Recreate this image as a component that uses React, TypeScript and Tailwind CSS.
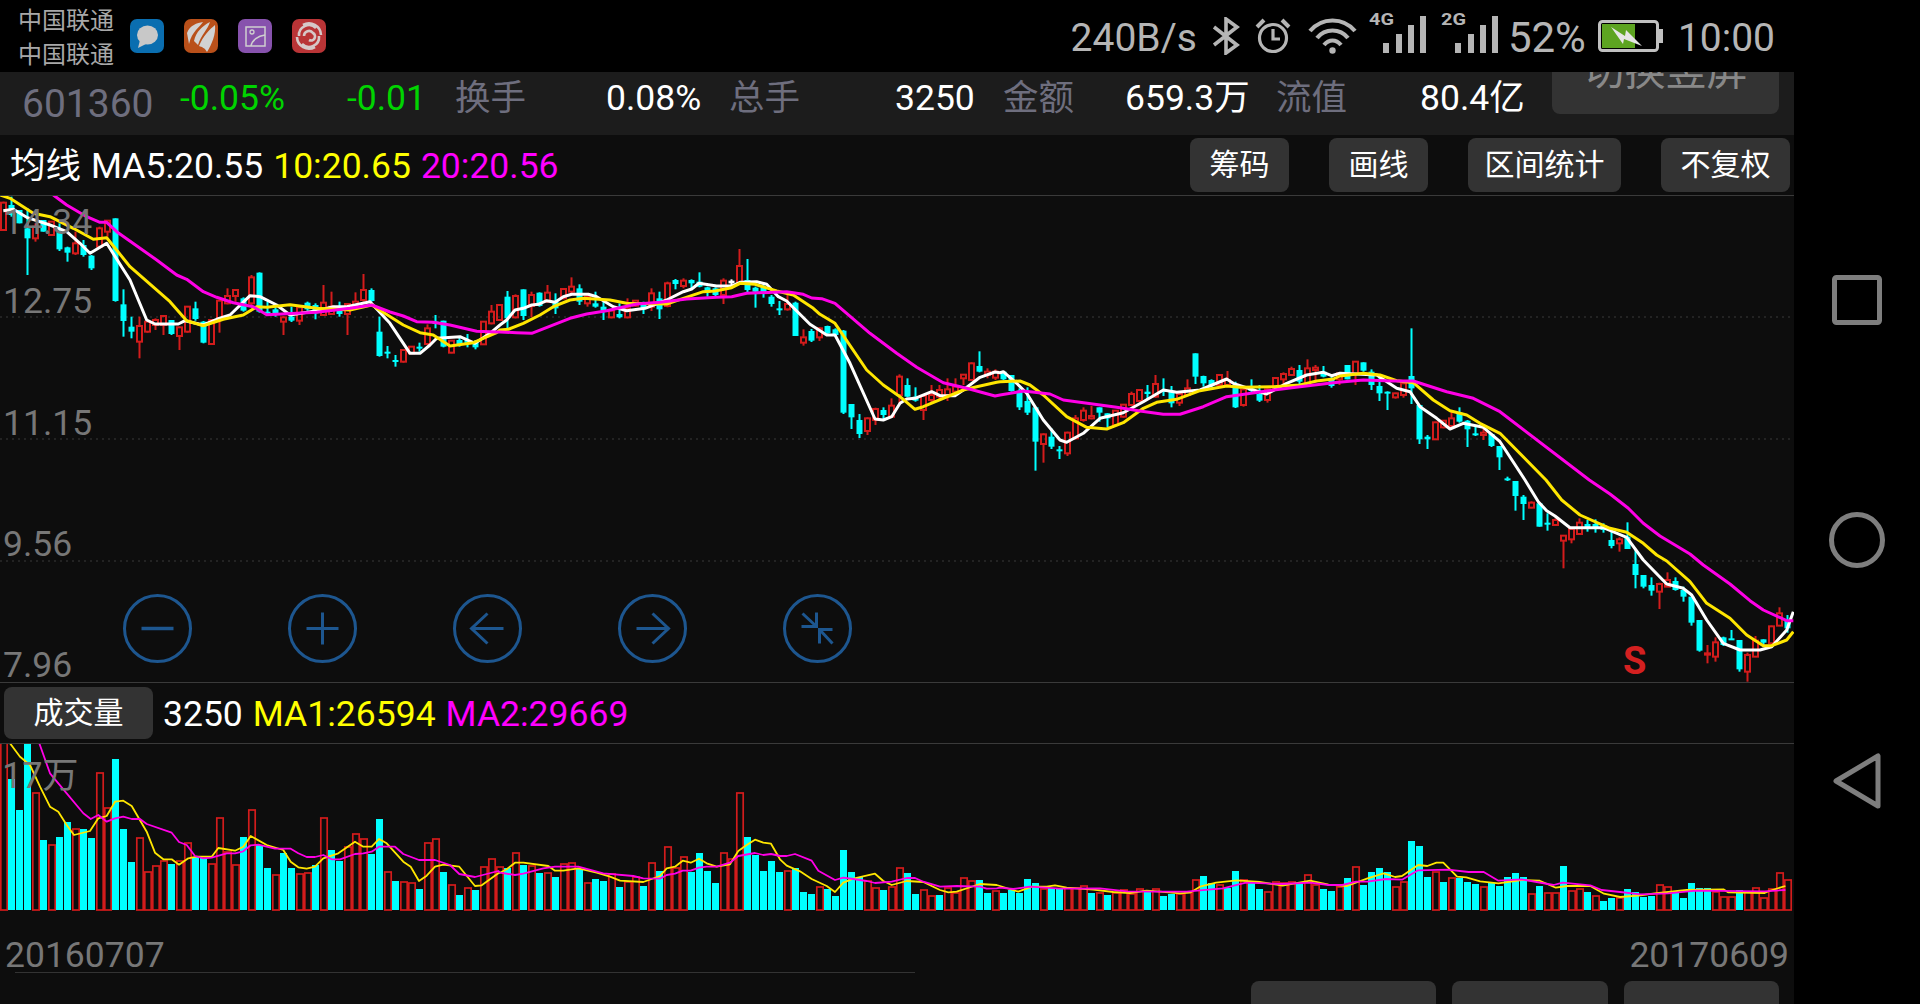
const RED = "#d31c1c";
const CYAN = "#00ffff";
const WHITE = "#ffffff";
const YELLOW = "#ffe600";
const MAGENTA = "#ff00e6";

// one chart slot is 8px wide; positive volume = cyan, negative = red
const VOL = [
  -167, 131, 100, 166, -117, 70, -65, 73, 88, -81, 81, 72, -137, -102, 151, 81, 48, -72, -38, -44, -49, 46, -49, -67, 53, 52, -46, -92, -58, -45, 73, -100, 65, 42, -35, 57, 42, -36, -37, 45, -92, 60, 49, -63, -76, -71, 56, 91, -38, 29, -28, -27, 21, -67, -71, 38, -25, 15, -22, 20, -43, -51, -43,
  42, -57, 45, -44, 37, -37, 33, -46, -47, 41, -27, 31, 29, -36, 23, -28, -33, 24, -47, 39, -63, -42, -53, 38, 57, 39, 27, -57, -51, -117, 73, 55, 39, 49, 38, -39, 42, 18, 16, -23, 21, 14, 60, 38, 33, -29, -22, 20, -23, -42, 37, 16, -20, -14, 15, -22, -17, -32, -29, 30, 17, -19,
  17, 20, 17, 31, 27, -21, 22, 21, -22, -22, -24, 17, -17, 15, -17, -20, -16, -21, 19, -21, 14, 16, -16, -18, -30, 34, 27, -25, 22, 39, -30, 27, 21, -18, -28, -27, -28, 27, -35, -25, 21, 19, -23, 32, -43, 25, 38, 42, 38, -23, -28, 69, 64, 33, -38, 28, -32, 32, 28, 26, -23, 27, 24, 33, 37, 33, -16, 24, -17, -17, 44, -19, -21, 18, -14, 9, 12, -12, 21, 18, 13, 14, -25, -23, 17, 12, 27, 22, 22, -18, -13, -13, 20, -18, -22, -12, -21, -37, -30,
];

type Candle = [string, number, number, number, number];
type Zone = { start: number; ox: number; oy: number; rows: Candle[] };

const ZONES: Zone[] = [
  {
    start: 0, ox: 0, oy: 190,
    rows: [
      ["r", 35, 38, 120, 122], ["c", 20, 45, 75, 80], ["c", 60, 60, 100, 100], ["c", 55, 115, 145, 255], ["r", 100, 110, 145, 155], ["c", 90, 90, 125, 125], ["r", 95, 95, 135, 138], ["c", 100, 125, 178, 183], ["c", 170, 172, 188, 215], ["r", 125, 160, 190, 195], ["c", 150, 165, 195, 200], ["c", 195, 197, 235, 240], ["r", 110, 115, 170, 175], ["r", 90, 92, 125, 140], ["c", 85, 85, 333, 335], ["c", 298, 343, 393, 440], ["c", 380, 410, 425, 445], ["r", 380, 408, 455, 505], ["r", 392, 395, 425, 428], ["r", 385, 390, 405, 420], ["r", 375, 378, 405, 435], ["c", 390, 390, 432, 435], ["r", 410, 412, 438, 480], ["r", 348, 350, 425, 428], ["c", 335, 355, 387, 392], ["c", 393, 395, 458, 460], ["r", 388, 390, 462, 464], ["r", 330, 332, 385, 428], ["r", 295, 318, 340, 343], ["r", 298, 300, 318, 335], ["c", 322, 325, 362, 365], ["r", 255, 262, 340, 345], ["c", 247, 248, 365, 368], ["c", 335, 365, 370, 378],
      ["c", 350, 358, 372, 380], ["r", 378, 382, 395, 435], ["c", 350, 380, 392, 396], ["r", 350, 352, 392, 405], ["c", 335, 338, 358, 362], ["c", 340, 345, 370, 388], ["r", 285, 338, 375, 378], ["r", 305, 350, 372, 375], ["c", 335, 355, 372, 380], ["r", 340, 342, 372, 435], ["r", 307, 335, 350, 352], ["r", 252, 300, 330, 335], ["c", 295, 300, 333, 335], ["c", 380, 425, 498, 500], ["c", 468, 485, 490, 505], ["c", 495, 510, 515, 530], ["r", 478, 480, 515, 518], ["r", 468, 470, 490, 492], ["c", 458, 470, 475, 485], ["r", 403, 415, 462, 465], ["c", 375, 395, 402, 415], ["c", 392, 392, 470, 472], ["r", 450, 452, 488, 490], ["c", 440, 450, 462, 470], ["c", 432, 450, 462, 472], ["c", 450, 458, 472, 478], ["r", 395, 395, 463, 465], ["r", 345, 365, 400, 403], ["r", 343, 345, 390, 393],
    ],
  },
  {
    start: 63, ox: 500, oy: 240,
    rows: [
      ["c", 153, 170, 235, 265], ["r", 163, 168, 232, 235], ["c", 148, 148, 228, 240], ["r", 155, 165, 198, 232], ["c", 157, 158, 198, 200], ["r", 135, 158, 185, 188], ["c", 160, 185, 205, 222], ["r", 145, 147, 175, 178], ["r", 112, 140, 155, 165], ["c", 133, 145, 185, 195], ["r", 165, 170, 190, 200], ["c", 155, 190, 200, 203], ["c", 185, 200, 212, 240], ["r", 210, 212, 232, 235], ["c", 190, 222, 232, 235], ["r", 175, 205, 232, 235], ["r", 180, 182, 197, 200], ["c", 185, 190, 205, 222], ["r", 145, 160, 200, 213], ["c", 155, 175, 208, 237], ["r", 125, 130, 198, 202], ["c", 117, 120, 132, 148], ["r", 115, 122, 138, 145], ["c", 118, 120, 130, 145], ["c", 97, 125, 140, 142], ["c", 140, 142, 158, 170], ["c", 142, 145, 165, 168], ["r", 115, 122, 165, 192], ["w", 118, 122, 130, 140], ["r", 27, 78, 130, 135],
      ["c", 57, 120, 150, 160], ["c", 140, 143, 155, 203], ["c", 135, 140, 160, 173], ["c", 165, 170, 192, 200], ["c", 183, 205, 210, 225], ["r", 165, 192, 208, 212], ["c", 185, 188, 288, 288], ["r", 268, 292, 308, 317], ["c", 267, 273, 302, 306], ["r", 262, 265, 292, 303], ["c", 257, 258, 280, 282], ["c", 265, 268, 285, 290], ["c", 270, 272, 518, 522], ["c", 492, 492, 532, 567], ["c", 522, 540, 582, 594], ["r", 532, 535, 573, 585], ["r", 503, 507, 540, 555], ["c", 502, 510, 525, 537], ["r", 475, 497, 530, 533], ["r", 403, 410, 465, 490], ["c", 415, 435, 470, 472], ["c", 442, 470, 482, 485], ["r", 465, 468, 510, 540], ["r", 435, 465, 480, 488], ["r", 435, 450, 470, 478], ["r", 415, 448, 465, 483], ["r", 415, 440, 455, 458], ["r", 402, 404, 415, 435], ["r", 367, 370, 420, 423], ["c", 334, 378, 395, 397], ["r", 385, 395, 405, 415], ["r", 388, 395, 413, 420],
    ],
  },
  {
    start: 125, ox: 1000, oy: 320,
    rows: [
      ["c", 155, 155, 178, 180], ["c", 165, 165, 213, 215], ["c", 205, 212, 262, 270], ["c", 202, 243, 278, 285], ["c", 260, 262, 365, 452], ["r", 340, 343, 372, 428], ["c", 325, 350, 380, 387], ["c", 378, 388, 392, 417], ["r", 335, 338, 400, 408], ["r", 285, 295, 355, 358], ["r", 262, 272, 300, 305], ["r", 258, 288, 295, 298], ["c", 262, 262, 278, 305], ["c", 280, 280, 295, 322], ["r", 270, 272, 315, 318], ["r", 252, 254, 290, 293], ["r", 215, 222, 255, 258], ["r", 208, 210, 243, 245], ["c", 195, 215, 222, 237], ["r", 165, 192, 230, 233], ["c", 175, 210, 215, 228], ["c", 198, 212, 250, 262], ["r", 220, 222, 248, 258], ["r", 178, 205, 225, 228], ["c", 100, 100, 170, 192], ["c", 167, 168, 190, 200], ["c", 178, 180, 195, 203], ["r", 163, 165, 195, 198], ["r", 153, 180, 195, 200], ["c", 185, 195, 262, 264], ["r", 205, 208, 255, 260],
      ["c", 178, 205, 213, 218], ["c", 195, 222, 242, 246], ["r", 205, 208, 240, 248], ["r", 172, 174, 205, 208], ["r", 157, 162, 178, 195], ["r", 140, 147, 165, 168], ["c", 135, 150, 185, 195], ["r", 118, 145, 190, 193], ["r", 135, 143, 150, 180], ["c", 138, 155, 170, 172], ["c", 170, 175, 198, 203], ["r", 157, 160, 178, 195], ["c", 135, 135, 178, 178], ["r", 124, 125, 160, 195], ["c", 127, 127, 152, 155], ["c", 148, 155, 195, 210], ["c", 170, 198, 220, 243], ["c", 214, 215, 218, 270], ["r", 218, 220, 232, 236], ["r", 185, 190, 225, 233], ["c", 25, 168, 205, 252], ["c", 255, 255, 358, 372], ["c", 345, 350, 358, 387], ["r", 305, 307, 358, 360], ["r", 300, 302, 322, 325], ["r", 272, 295, 318, 322], ["c", 262, 278, 305, 308], ["c", 300, 302, 328, 381], ["c", 320, 340, 345, 348], ["r", 325, 338, 345, 360], ["c", 340, 342, 378, 381], ["c", 378, 378, 412, 450],
    ],
  },
  {
    start: 188, ox: 1500, oy: 480,
    rows: [
      ["c", -10, -5, 0, 3], ["c", 3, 3, 48, 92], ["c", 45, 50, 72, 120], ["r", 64, 68, 83, 85], ["c", 70, 70, 140, 140], ["c", 100, 128, 132, 152], ["r", 115, 120, 135, 136], ["r", 165, 167, 182, 265], ["r", 145, 147, 178, 190], ["r", 115, 128, 162, 163], ["c", 120, 132, 145, 155], ["c", 118, 132, 145, 158], ["c", 130, 135, 150, 158], ["c", 150, 180, 198, 205], ["r", 172, 178, 190, 215], ["c", 127, 170, 207, 207], ["c", 210, 252, 285, 325], ["c", 285, 285, 320, 325], ["c", 292, 315, 332, 347], ["r", 308, 312, 335, 387], ["r", 277, 300, 320, 320], ["c", 292, 303, 330, 332], ["c", 320, 330, 350, 365], ["c", 350, 350, 428, 437], ["c", 420, 420, 512, 515], ["r", 495, 520, 524, 550], ["r", 472, 487, 530, 545], ["c", 470, 472, 495, 498], ["c", 450, 475, 478, 478], ["c", 480, 480, 568, 575], ["r", 518, 525, 575, 605], ["r", 468, 482, 530, 530], ["c", 478, 478, 488, 500], ["r", 437, 439, 490, 490], ["r", 382, 400, 437, 437], ["c", 405, 420, 445, 458],
    ],
  },
];

type Seg = [number, number, number, number[]];

// each section holds points as read off a crop: page x = ox + v / sx, page y = oy + v / 3
function toPoints(segs: Seg[]) {
  const out: string[] = [];
  let last = -1;
  for (const [ox, oy, sx, pts] of segs) {
    for (let i = 0; i < pts.length; i += 2) {
      const x = ox + pts[i] / sx;
      const y = oy + pts[i + 1] / 3;
      if (x <= last) continue;
      last = x;
      out.push(`${x.toFixed(1)},${y.toFixed(1)}`);
    }
  }
  return out.join(" ");
}

const MA5 = toPoints([
  [0, 190, 3, [10, 62, 40, 58, 80, 82, 150, 105, 200, 125, 240, 160, 270, 190, 320, 160, 390, 270, 440, 390, 465, 402, 535, 402, 555, 392, 610, 405, 650, 388, 690, 375, 750, 317, 780, 320, 830, 345, 870, 375, 950, 362, 1000, 350, 1040, 350, 1110, 335, 1170, 400, 1230, 490, 1260, 490, 1290, 465, 1310, 445, 1380, 440, 1425, 460, 1470, 430]],
  [500, 240, 3, [0, 255, 20, 240, 45, 210, 70, 205, 95, 195, 115, 193, 140, 182, 165, 187, 190, 170, 215, 163, 265, 163, 290, 170, 340, 200, 380, 212, 435, 205, 500, 180, 550, 155, 575, 147, 597, 130, 650, 138, 695, 138, 720, 127, 770, 125, 800, 133, 835, 170, 860, 183, 930, 253, 980, 285, 1005, 285, 1050, 370, 1125, 537, 1150, 540, 1175, 530, 1200, 490, 1220, 477, 1245, 475, 1295, 455, 1320, 467, 1365, 467, 1390, 450, 1440, 412, 1485, 396]],
  [1000, 320, 3, [0, 158, 10, 155, 50, 190, 80, 220, 130, 300, 180, 360, 200, 367, 250, 340, 300, 295, 370, 278, 430, 245, 490, 210, 530, 217, 600, 210, 680, 177, 700, 190, 760, 210, 800, 222, 860, 190, 920, 165, 970, 157, 995, 167, 1020, 160, 1130, 165, 1190, 205, 1230, 215, 1260, 260, 1310, 295, 1350, 327, 1390, 310, 1450, 322, 1500, 365]],
  [1500, 480, 3, [75, 0, 115, 65, 140, 92, 165, 108, 210, 143, 310, 143, 380, 172, 430, 240, 500, 312, 550, 325, 575, 345, 620, 420, 670, 490, 720, 510, 780, 510, 815, 500, 860, 450, 880, 395]],
]);

const MA10 = toPoints([
  [0, 190, 3, [0, 15, 30, 25, 100, 70, 150, 80, 220, 115, 280, 148, 320, 143, 390, 230, 510, 335, 560, 392, 610, 407, 670, 388, 730, 375, 770, 350, 800, 352, 870, 344, 950, 355, 1050, 360, 1115, 345, 1210, 405, 1260, 428, 1300, 435, 1350, 468, 1420, 458, 1490, 428]],
  [500, 240, 3, [0, 270, 25, 268, 70, 250, 120, 225, 160, 200, 210, 180, 250, 175, 330, 180, 380, 190, 500, 192, 550, 175, 610, 155, 645, 153, 695, 143, 720, 130, 765, 133, 830, 153, 880, 165, 940, 205, 960, 223, 1005, 250, 1100, 390, 1150, 435, 1200, 470, 1245, 508, 1270, 500, 1390, 450, 1430, 440, 1490, 427]],
  [1000, 320, 3, [0, 185, 60, 183, 90, 195, 130, 225, 200, 290, 260, 322, 320, 327, 370, 308, 430, 265, 470, 247, 530, 238, 600, 212, 680, 198, 720, 202, 820, 200, 900, 195, 950, 183, 1000, 177, 1020, 168, 1090, 160, 1140, 165, 1190, 182, 1240, 188, 1300, 240, 1350, 272, 1400, 285, 1440, 310, 1500, 340]],
  [1500, 480, 3, [138, 0, 185, 60, 240, 105, 330, 145, 380, 157, 430, 190, 470, 225, 500, 243, 570, 305, 620, 370, 690, 415, 740, 465, 790, 497, 815, 497, 860, 480, 880, 455]],
]);

const MA20 = toPoints([
  [0, 190, 3, [160, 15, 200, 45, 260, 80, 300, 97, 320, 97, 350, 125, 470, 210, 530, 255, 560, 268, 610, 305, 650, 322, 700, 338, 760, 350, 800, 374, 950, 367, 1050, 355, 1115, 345, 1170, 366, 1210, 378, 1250, 395, 1300, 397, 1350, 405, 1430, 424, 1490, 426]],
  [500, 240, 3, [0, 276, 50, 278, 95, 280, 210, 235, 260, 222, 320, 212, 410, 192, 480, 187, 560, 177, 650, 172, 695, 170, 740, 160, 860, 155, 910, 163, 935, 174, 965, 176, 1005, 190, 1110, 280, 1190, 340, 1250, 382, 1330, 428, 1400, 445, 1485, 468]],
  [1000, 320, 3, [0, 225, 70, 213, 150, 222, 190, 240, 350, 262, 420, 273, 490, 283, 540, 283, 610, 260, 680, 230, 800, 213, 900, 200, 1000, 188, 1090, 180, 1180, 183, 1240, 183, 1340, 215, 1420, 235, 1500, 275]],
  [1500, 480, 3, [268, 0, 330, 42, 385, 85, 430, 130, 480, 168, 570, 222, 610, 255, 690, 312, 750, 362, 790, 390, 860, 422, 880, 422]],
]);

const VOL_MA1 = toPoints([
  [0, 730, 3, [30, 40, 60, 80, 90, 105, 120, 170, 150, 230, 175, 245, 200, 285, 222, 315, 270, 303, 295, 265, 320, 258, 345, 215, 370, 212, 395, 228, 440, 305, 465, 368, 490, 388, 515, 388, 537, 404, 565, 385, 590, 380, 635, 380, 655, 354, 705, 362, 730, 350, 752, 318, 800, 345, 850, 360, 872, 395, 895, 412, 920, 416, 945, 410, 970, 385, 1015, 370, 1065, 335, 1090, 350, 1115, 350, 1137, 327, 1160, 340, 1210, 395, 1232, 410, 1257, 453, 1280, 437, 1305, 410, 1330, 404, 1378, 410, 1425, 468, 1445, 466, 1495, 430]],
  [500, 780, 3, [0, 278, 20, 268, 45, 248, 70, 248, 145, 258, 165, 272, 190, 272, 235, 265, 290, 278, 330, 290, 360, 302, 430, 306, 480, 288, 500, 265, 525, 260, 548, 242, 572, 248, 597, 236, 620, 250, 650, 260, 690, 253, 715, 213, 740, 195, 765, 179, 790, 188, 813, 191, 840, 238, 860, 257, 900, 274, 935, 297, 980, 318, 1005, 336, 1030, 308, 1060, 296, 1125, 281, 1150, 303, 1175, 315, 1220, 303, 1270, 306, 1320, 330, 1345, 337, 1370, 335, 1440, 312, 1490, 315]],
  [1000, 820, 3, [0, 198, 55, 215, 95, 200, 140, 200, 165, 196, 200, 203, 280, 209, 340, 216, 390, 219, 440, 212, 480, 215, 540, 220, 570, 218]],
  [1200, 730, 2.178, [0, 470, 35, 458, 80, 451, 130, 456, 180, 467, 240, 452, 280, 464, 320, 468, 365, 445, 400, 430, 425, 441, 440, 438, 475, 405, 495, 408, 515, 398, 530, 398, 560, 440, 580, 442, 610, 454, 650, 460, 700, 450, 740, 452, 775, 473, 800, 468, 850, 468, 880, 491, 915, 501, 960, 496, 990, 490, 1060, 480, 1140, 478, 1150, 487, 1230, 489, 1240, 483, 1275, 468]],
]);

const VOL_MA2 = toPoints([
  [0, 730, 3, [118, 40, 150, 130, 200, 190, 250, 250, 272, 267, 295, 255, 320, 275, 345, 265, 370, 260, 395, 267, 420, 267, 440, 282, 515, 308, 537, 336, 560, 345, 585, 378, 610, 385, 635, 383, 680, 370, 705, 370, 730, 364, 752, 346, 775, 344, 825, 356, 872, 356, 895, 370, 920, 381, 945, 381, 970, 375, 995, 388, 1020, 388, 1065, 372, 1090, 370, 1115, 365, 1137, 350, 1185, 350, 1210, 372, 1257, 390, 1305, 390, 1350, 405, 1378, 432, 1425, 441, 1495, 423]],
  [500, 780, 3, [0, 278, 45, 285, 70, 281, 130, 265, 165, 260, 235, 260, 310, 280, 400, 288, 430, 295, 480, 296, 500, 285, 525, 281, 548, 272, 572, 272, 597, 263, 620, 260, 650, 260, 690, 248, 715, 228, 765, 219, 790, 225, 813, 222, 840, 228, 860, 228, 885, 222, 935, 242, 955, 272, 1005, 300, 1030, 293, 1060, 297, 1100, 303, 1125, 309, 1175, 305, 1220, 294, 1245, 294, 1270, 305, 1320, 320, 1370, 318, 1440, 320, 1460, 326, 1490, 325]],
  [1000, 820, 3, [0, 203, 40, 207, 90, 200, 180, 206, 300, 205, 380, 214, 470, 215, 560, 215]],
  [1200, 730, 2.178, [0, 481, 50, 475, 100, 458, 180, 462, 240, 458, 280, 465, 310, 465, 340, 455, 365, 455, 405, 447, 440, 449, 475, 421, 540, 419, 585, 426, 618, 426, 650, 452, 700, 448, 770, 465, 790, 458, 850, 466, 875, 480, 915, 486, 960, 493, 1020, 490, 1080, 482, 1230, 484, 1275, 480]],
]);

function Candles() {
  return (
    <>
      {ZONES.flatMap((zone) =>
        zone.rows.map(([kind, h, t, b, l], n) => {
          const cx = 8 * (zone.start + n) + 3.5;
          const y = (v: number) => zone.oy + v / 3;
          const color = kind === "r" ? RED : kind === "w" ? WHITE : CYAN;
          const key = zone.start + n;
          if (kind === "r") {
            return (
              <g key={key} stroke={color} strokeWidth={2} fill="none">
                <line x1={cx} x2={cx} y1={y(h)} y2={y(t)} />
                <rect x={cx - 2.5} y={y(t)} width={5} height={Math.max(y(b) - y(t), 1)} />
                <line x1={cx} x2={cx} y1={y(b)} y2={y(l)} />
              </g>
            );
          }
          return (
            <g key={key} fill={color}>
              <rect x={cx - 1} y={y(h)} width={2} height={y(l) - y(h)} />
              <rect x={cx - 3} y={y(t)} width={6} height={Math.max(y(b) - y(t), 2)} />
            </g>
          );
        }),
      )}
    </>
  );
}

function PriceChart() {
  return (
    <svg width={1794} height={486} viewBox="0 196 1794 486" className="block">
      {[317, 439, 561].map((y) => (
        <line key={y} x1={0} x2={1794} y1={y} y2={y} stroke="#3a3a3a" strokeDasharray="2 4" />
      ))}
      <Candles />
      <g fill="none" strokeWidth={3} strokeLinejoin="round">
        <polyline points={MA5} stroke={WHITE} />
        <polyline points={MA10} stroke={YELLOW} />
        <polyline points={MA20} stroke={MAGENTA} />
      </g>
    </svg>
  );
}

function VolumeChart() {
  return (
    <svg width={1794} height={168} viewBox="0 744 1794 168" className="block">
      {VOL.map((v, i) => {
        const h = Math.abs(v);
        if (v > 0) return <rect key={i} x={8 * i} y={910 - h} width={7} height={h} fill={CYAN} />;
        return <rect key={i} x={8 * i + 0.8} y={910 - h} width={6.4} height={h} fill="none" stroke={RED} strokeWidth={1.7} />;
      })}
      <g fill="none" strokeWidth={1.8} strokeLinejoin="round">
        <polyline points={VOL_MA1} stroke={YELLOW} />
        <polyline points={VOL_MA2} stroke={MAGENTA} />
      </g>
    </svg>
  );
}

function RoundButton({ children }: { children: React.ReactNode }) {
  return (
    <svg width={69} height={69} viewBox="-34.5 -34.5 69 69" fill="none" stroke="#1d568f" strokeWidth={3}>
      <circle r={33} />
      {children}
    </svg>
  );
}

function Signal({ label }: { label: string }) {
  return (
    <svg width={57} height={46} viewBox="0 0 57 46" className="block">
      <text x={0} y={15} fontSize={17} fontWeight={700} fontFamily="Roboto" fill="#b5b5b5" textLength={25} lengthAdjust="spacingAndGlyphs">
        {label}
      </text>
      <g fill="#b5b5b5">
        <rect x={14} y={33} width={6} height={10} />
        <rect x={27} y={24} width={6} height={19} />
        <rect x={39} y={15} width={6} height={28} />
        <rect x={51} y={6} width={6} height={37} />
      </g>
    </svg>
  );
}

function ToolButton({ label, w }: { label: string; w: string }) {
  return (
    <button type="button" className={`${w} flex h-[54px] items-center justify-center rounded-lg bg-[#333333] text-[30px] text-white`}>
      {label}
    </button>
  );
}

function StatCell({ w, className, children }: { w: string; className: string; children: React.ReactNode }) {
  return <span className={`${w} ${className} shrink-0 whitespace-nowrap`}>{children}</span>;
}

export default function App() {
  return (
    <div className="h-[1004px] w-[1920px] overflow-hidden bg-black font-[Roboto,'Noto_Sans_CJK_SC',sans-serif]">
      {/* status bar */}
      <div className="flex h-[72px] items-center">
        <div className="w-[130px] pl-[18px] pt-[4px] text-[24px] leading-[34px] text-[#a8a8a8]">
          <div>中国联通</div>
          <div>中国联通</div>
        </div>
        <div className="flex gap-[20px]">
          <svg width={34} height={34} viewBox="0 0 34 34">
            <rect width={34} height={34} rx={7} fill="#0a6eb0" />
            <ellipse cx={17.5} cy={16} rx={10.5} ry={9.5} fill="#c8c8c8" />
            <path d="M10 21 L8 29 L16 25 Z" fill="#c8c8c8" />
          </svg>
          <svg width={34} height={34} viewBox="0 0 34 34">
            <rect width={34} height={34} rx={7} fill="#b9501a" />
            <path d="M3 14 C6 6 13 4 19 3 C16 8 8 12 5 25 Z M10 22 C12 13 18 7 26 3 C24 10 17 16 14 26 Z M15 27 C19 17 26 10 31 6 C32 15 28 25 23 33 C21 29 18 28 15 27 Z" fill="#d2d2d2" />
          </svg>
          <svg width={34} height={34} viewBox="0 0 34 34">
            <rect width={34} height={34} rx={7} fill="#8752ad" />
            <rect x={8} y={8} width={19} height={19} fill="none" stroke="#cfcfcf" strokeWidth={1.5} />
            <circle cx={14} cy={13} r={2} fill="none" stroke="#cfcfcf" strokeWidth={1.3} />
            <path d="M13 27 C14 21 20 17 27 16" fill="none" stroke="#cfcfcf" strokeWidth={1.5} />
          </svg>
          <svg width={34} height={34} viewBox="0 0 34 34">
            <rect width={34} height={34} rx={7} fill="#b93436" />
            <g fill="none" stroke="#d6c8c8" strokeWidth={2.6}>
              <path d="M7 17 A10 10 0 0 1 24 9" />
              <path d="M11 6 A12 12 0 0 1 29 16" />
              <path d="M27 17 A10 10 0 0 1 10 25" />
              <path d="M23 28 A12 12 0 0 1 5 18" />
              <path d="M12 17 A5 5 0 0 1 21 14 A4 4 0 0 1 17 21" />
            </g>
          </svg>
        </div>
        <div className="ml-auto mr-[145px] flex items-center text-[39px] leading-none text-[#b5b5b5]">
          <span className="translate-y-[2px]">240B/s</span>
          <svg width={28} height={38} viewBox="0 0 28 38" className="ml-[15px]" fill="none" stroke="#b5b5b5" strokeWidth={3.6}>
            <path d="M2 10 L25 28 L14 36 V2 L25 10 L2 28" />
          </svg>
          <svg width={36} height={36} viewBox="0 0 36 36" className="ml-[15px]" fill="none" stroke="#b5b5b5" strokeWidth={3.2}>
            <circle cx={18} cy={20} r={13.5} />
            <path d="M18 11 V21 H25" />
            <path d="M2 9 L9 2 M27 2 L34 9" strokeWidth={4} />
          </svg>
          <svg width={49} height={36} viewBox="0 0 49 36" className="ml-[17px]" fill="none" stroke="#b5b5b5" strokeWidth={4.2}>
            <path d="M2 13 C14 -1 35 -1 47 13" />
            <path d="M9 20 C17 10 32 10 40 20" />
            <path d="M16 27 C21 21 28 21 33 27" />
            <circle cx={24.5} cy={32.5} r={3.2} fill="#b5b5b5" stroke="none" />
          </svg>
          <span className="ml-[12px] -translate-y-[3px]">
            <Signal label="4G" />
          </span>
          <span className="ml-[15px] -translate-y-[3px]">
            <Signal label="2G" />
          </span>
          <span className="ml-[10px] translate-y-[2px] text-[42px]">52%</span>
          <svg width={65} height={32} viewBox="0 0 65 32" className="ml-[12px]">
            <rect x={1.5} y={1.5} width={58} height={29} rx={3} fill="none" stroke="#c0c0c0" strokeWidth={3} />
            <rect x={4} y={4} width={33} height={24} fill="#5da421" />
            <rect x={61} y={9} width={4} height={14} fill="#c0c0c0" />
            <path d="M13 7 L27 16 L28 10 L44 26 L26 19 L25 24 Z" fill="#e6e6e6" />
          </svg>
          <span className="ml-[15px] translate-y-[2px]">10:00</span>
        </div>
      </div>

      <div className="flex">
        <main className="w-[1794px] shrink-0 bg-[#0d0d0d]">
          {/* quote row */}
          <div className="flex h-[63px] items-center overflow-hidden bg-[#1c1c1c] pb-[10px] pl-[22px] text-[35.5px] leading-none">
            <StatCell w="w-[158px]" className="pt-[11px] text-[39px] text-[#6e6e7e]">601360</StatCell>
            <StatCell w="w-[167px]" className="text-[#00d400]">-0.05%</StatCell>
            <StatCell w="w-[108px]" className="text-[#00d400]">-0.01</StatCell>
            <StatCell w="w-[151px]" className="text-[#6e6e7e]">换手</StatCell>
            <StatCell w="w-[123px]" className="text-white">0.08%</StatCell>
            <StatCell w="w-[166px]" className="text-[#6e6e7e]">总手</StatCell>
            <StatCell w="w-[108px]" className="text-white">3250</StatCell>
            <StatCell w="w-[122px]" className="text-[#6e6e7e]">金额</StatCell>
            <StatCell w="w-[151px]" className="text-white">659.3万</StatCell>
            <StatCell w="w-[144px]" className="text-[#6e6e7e]">流值</StatCell>
            <StatCell w="w-[132px]" className="text-white">80.4亿</StatCell>
            <button type="button" className="-mt-[21px] flex h-[63px] w-[227px] shrink-0 items-start justify-center self-start rounded-lg bg-[#333333] text-[41px] leading-[41px] text-[#888888]">
              切换竖屏
            </button>
          </div>

          {/* moving average legend */}
          <div className="flex h-[61px] items-center border-b border-[#3a3a3a] pl-[10px] text-[35.5px] leading-none">
            <div className="flex translate-y-[2px] gap-[10px]">
              <span className="text-white">均线</span>
              <span className="text-white">MA5:20.55</span>
              <span className="text-[#ffff00]">10:20.65</span>
              <span className="text-[#ff00ff]">20:20.56</span>
            </div>
            <div className="ml-auto mr-[4px] flex gap-[40px]">
              <ToolButton w="w-[99px]" label="筹码" />
              <ToolButton w="w-[99px]" label="画线" />
              <ToolButton w="w-[153px]" label="区间统计" />
              <ToolButton w="w-[129px]" label="不复权" />
            </div>
          </div>

          {/* price chart */}
          <div className="relative h-[486px] overflow-hidden">
            <PriceChart />
            <span className="absolute left-[3px] top-[9px] text-[35.5px] leading-[34px] text-[#777777]">14.34</span>
            <span className="absolute left-[3px] top-[88px] text-[35.5px] leading-[34px] text-[#777777]">12.75</span>
            <span className="absolute left-[3px] top-[210px] text-[35.5px] leading-[34px] text-[#777777]">11.15</span>
            <span className="absolute left-[3px] top-[331px] text-[35.5px] leading-[34px] text-[#777777]">9.56</span>
            <span className="absolute left-[3px] top-[453px] text-[35.5px] leading-[33px] text-[#777777]">7.96</span>
            <span className="absolute left-[1623px] top-[446px] text-[38px] font-bold leading-[38px] text-[#d42020]">S</span>
            <div className="absolute left-[123px] top-[398px] flex gap-[96px]">
              <RoundButton>
                <path d="M-16 0 H16" strokeWidth={3.5} />
              </RoundButton>
              <RoundButton>
                <path d="M-16 0 H16 M0 -16 V16" />
              </RoundButton>
              <RoundButton>
                <path d="M-16 0 H16 M0 -15 L-16 0 L0 15" />
              </RoundButton>
              <RoundButton>
                <path d="M-16 0 H16 M0 -15 L16 0 L0 15" />
              </RoundButton>
              <RoundButton>
                <path d="M-15 -15 L-1 -2 M-16 -2 H-1 V-16 M15 15 L2 1 M15 1 H2 V15" />
              </RoundButton>
            </div>
          </div>

          {/* volume legend */}
          <div className="flex h-[62px] items-center gap-[10px] border-y border-[#3a3a3a] pl-[4px] text-[35.5px] leading-none">
            <button type="button" className="flex h-[52px] w-[149px] items-center justify-center rounded-lg bg-[#333333] text-[30px] text-white">
              成交量
            </button>
            <span className="translate-y-[2px] text-white">3250</span>
            <span className="translate-y-[2px] text-[#ffff00]">MA1:26594</span>
            <span className="translate-y-[2px] text-[#ff00ff]">MA2:29669</span>
          </div>

          {/* volume chart */}
          <div className="relative h-[168px] overflow-hidden">
            <VolumeChart />
            <span className="absolute left-[2px] top-[15px] text-[36px] leading-[34px] text-[#777777]">17万</span>
          </div>

          {/* date axis */}
          <div className="relative h-[92px]">
            <div className="flex items-center justify-between pl-[5px] pr-[5px] pt-[26px] text-[35.5px] leading-[34px] text-[#777777]">
              <span>20160707</span>
              <span>20170609</span>
            </div>
            <div className="ml-[15px] h-px w-[900px] bg-[#333333]" />
            <div className="absolute left-[1251px] top-[69px] flex gap-[16px]">
              <div className="h-[40px] w-[185px] rounded-t-lg bg-[#333333]" />
              <div className="h-[40px] w-[156px] rounded-t-lg bg-[#333333]" />
              <div className="h-[40px] w-[155px] rounded-t-lg bg-[#333333]" />
            </div>
          </div>
        </main>

        {/* android nav */}
        <aside className="flex w-[126px] flex-col items-center pt-[203px]">
          <svg width={50} height={50} viewBox="0 0 50 50" fill="none" stroke="#7e7e7e" strokeWidth={5}>
            <rect x={2.5} y={2.5} width={45} height={45} rx={2} />
          </svg>
          <svg width={56} height={56} viewBox="0 0 56 56" className="mt-[187px]" fill="none" stroke="#7e7e7e" strokeWidth={5}>
            <circle cx={28} cy={28} r={25.5} />
          </svg>
          <svg width={48} height={56} viewBox="0 0 48 56" className="mt-[185px]" fill="none" stroke="#7e7e7e" strokeWidth={5} strokeLinejoin="round">
            <path d="M45 3 V53 L3 28 Z" />
          </svg>
        </aside>
      </div>
    </div>
  );
}
